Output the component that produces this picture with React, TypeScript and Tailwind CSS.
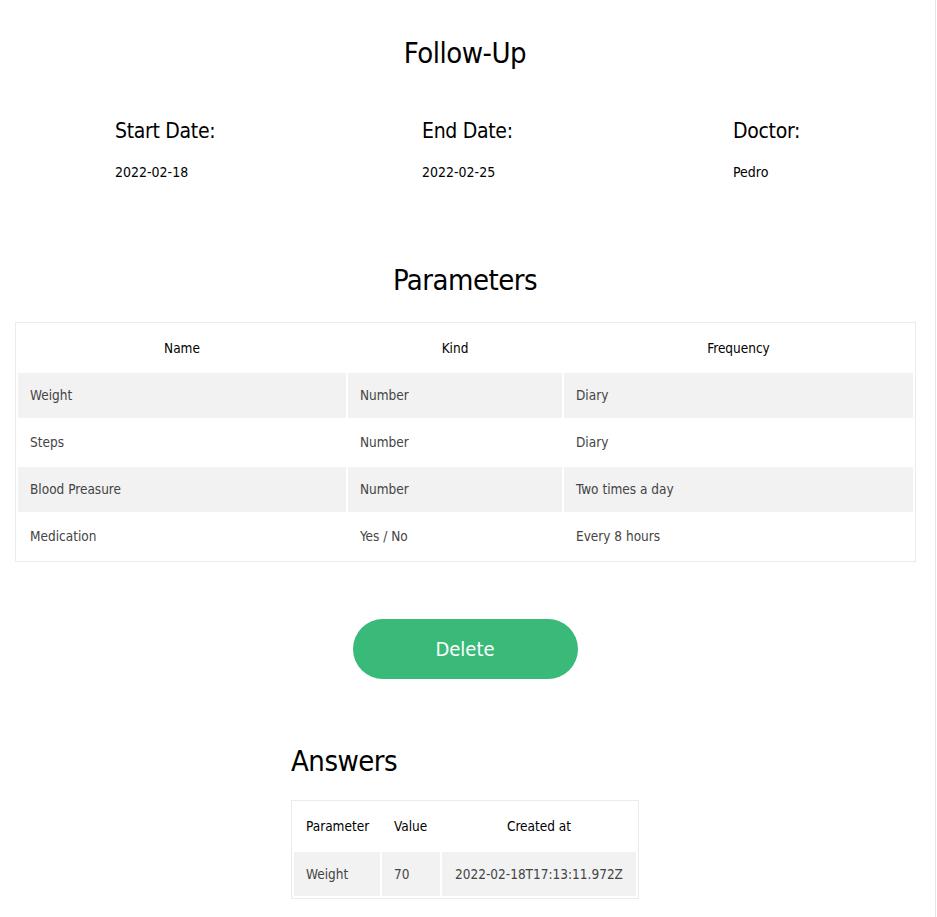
const font = { fontFamily: '"DejaVu Sans Condensed", "Liberation Sans", sans-serif' };

interface Parameter {
  name: string;
  kind: string;
  frequency: string;
}

const parameters: Parameter[] = [
  { name: "Weight", kind: "Number", frequency: "Diary" },
  { name: "Steps", kind: "Number", frequency: "Diary" },
  { name: "Blood Preasure", kind: "Number", frequency: "Two times a day" },
  { name: "Medication", kind: "Yes / No", frequency: "Every 8 hours" },
];

const answers = [{ parameter: "Weight", value: "70", createdAt: "2022-02-18T17:13:11.972Z" }];

export default function App() {
  return (
    <div className="min-h-screen bg-white" style={font}>
      <div className="w-[936px] min-h-[917px] border-r border-[#e6e6e6] bg-white">
        <main className="w-[930px] px-[15px] pb-4 text-black">
          {/* Cabecera */}
          <h1 className="pt-[33px] text-center text-[29px] leading-[40px] tracking-[-0.5px]">Follow-Up</h1>

          <div className="mt-[43px] grid grid-cols-[307px_311px_1fr] pl-[100px]">
            <div>
              <h2 className="text-[21px] leading-[30px] tracking-[-0.3px]">Start Date:</h2>
              <p className="mt-[16px] text-[14px] leading-[20px]">2022-02-18</p>
            </div>
            <div>
              <h2 className="text-[21px] leading-[30px] tracking-[-0.3px]">End Date:</h2>
              <p className="mt-[16px] text-[14px] leading-[20px]">2022-02-25</p>
            </div>
            <div>
              <h2 className="text-[21px] leading-[30px] tracking-[-0.3px]">Doctor:</h2>
              <p className="mt-[16px] text-[14px] leading-[20px]">Pedro</p>
            </div>
          </div>

          {/* Parámetros */}
          <h2 className="mt-[78px] text-center text-[29px] leading-[40px] tracking-[-0.5px]">Parameters</h2>
          <table className="mt-[22px] w-[901px] table-fixed border border-[#ebebeb] border-separate border-spacing-[2px] text-[13.5px]">
            <thead>
              <tr className="h-[46px]">
                <th className="w-[328px] font-normal">Name</th>
                <th className="w-[214px] font-normal">Kind</th>
                <th className="font-normal">Frequency</th>
              </tr>
            </thead>
            <tbody className="text-[#444]">
              {parameters.map((p, i) => (
                <tr key={p.name} className={`h-[45px] ${i % 2 === 0 ? "bg-[#f2f2f2]" : "bg-white"}`}>
                  <td className="px-3">{p.name}</td>
                  <td className="px-3">{p.kind}</td>
                  <td className="px-3">{p.frequency}</td>
                </tr>
              ))}
            </tbody>
          </table>

          <div className="mt-[57px] flex justify-center">
            <button className="h-[60px] w-[225px] rounded-full bg-[#3aba78] text-[20px] text-white">
              Delete
            </button>
          </div>

          {/* Respuestas */}
          <div className="mt-[62px] flex justify-center">
            <div className="w-[348px]">
              <h2 className="text-[29px] leading-[40px] tracking-[-0.5px]">Answers</h2>
              <table className="mt-[19px] w-[348px] table-fixed border border-[#ebebeb] border-separate border-spacing-[2px] text-[13.5px] whitespace-nowrap">
                <thead>
                  <tr className="h-[47px]">
                    <th className="w-[86px] px-3 text-left font-normal">Parameter</th>
                    <th className="w-[58px] px-3 text-left font-normal">Value</th>
                    <th className="font-normal">Created at</th>
                  </tr>
                </thead>
                <tbody className="text-[#444]">
                  {answers.map((a) => (
                    <tr key={a.createdAt} className="h-[44px] bg-[#f2f2f2]">
                      <td className="px-3">{a.parameter}</td>
                      <td className="px-3">{a.value}</td>
                      <td className="text-center">{a.createdAt}</td>
                    </tr>
                  ))}
                </tbody>
              </table>
            </div>
          </div>
        </main>
      </div>
    </div>
  );
}
